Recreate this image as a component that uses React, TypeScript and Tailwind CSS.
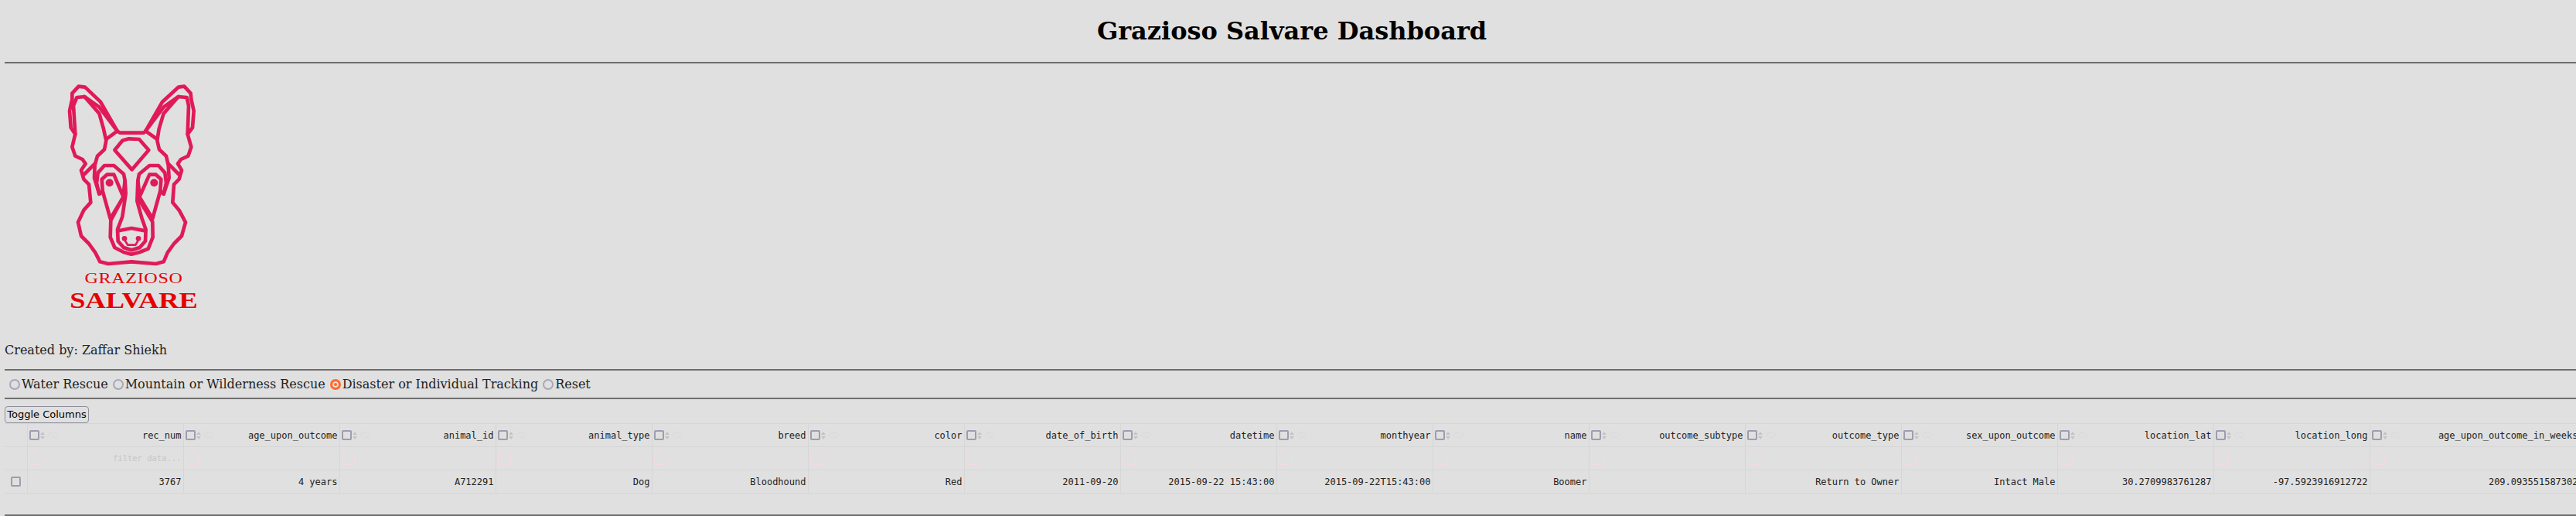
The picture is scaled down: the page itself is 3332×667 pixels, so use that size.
const columns = [
  { name: "rec_num", value: "3767" },
  { name: "age_upon_outcome", value: "4 years" },
  { name: "animal_id", value: "A712291" },
  { name: "animal_type", value: "Dog" },
  { name: "breed", value: "Bloodhound" },
  { name: "color", value: "Red" },
  { name: "date_of_birth", value: "2011-09-20" },
  { name: "datetime", value: "2015-09-22 15:43:00" },
  { name: "monthyear", value: "2015-09-22T15:43:00" },
  { name: "name", value: "Boomer" },
  { name: "outcome_subtype", value: "" },
  { name: "outcome_type", value: "Return to Owner" },
  { name: "sex_upon_outcome", value: "Intact Male" },
  { name: "location_lat", value: "30.2709983761287" },
  { name: "location_long", value: "-97.5923916912722" },
  { name: "age_upon_outcome_in_weeks", value: "209.093551587302" },
];

const radios = ["Water Rescue", "Mountain or Wilderness Rescue", "Disaster or Individual Tracking", "Reset"];

function Logo() {
  return (
    <svg viewBox="0 0 660 780" className="block w-[220px] h-[260px]" fill="none" stroke="#e01a59" strokeWidth="14" strokeLinejoin="round" strokeLinecap="round">
      {/* outer outline, left then right */}
      <path d="M275 238 L210 125 L150 68 L125 65 L100 92 L100 115 L90 160 L95 225 L112 250 L100 300 L112 335 L140 348 L152 365 L135 390 L145 425 L165 445 L172 515 L145 545 L123 592 L135 645 L165 675 L190 710 L208 745 L240 753 L330 745" />
      <path d="M385 238 L450 125 L512 68 L535 65 L560 92 L562 115 L572 160 L567 225 L548 250 L562 300 L550 335 L522 348 L510 365 L525 390 L515 425 L495 445 L490 515 L515 545 L540 592 L525 645 L495 675 L470 710 L455 745 L425 753 L330 745" />
      <path d="M275 238 L285 245 L378 245 L385 238" />
      {/* inner ear */}
      <path d="M112 250 L105 140 L118 108 L148 105 L205 170 L222 230 L232 275 L225 310 L198 335 L188 370 L186 420 L205 482" />
      <path d="M548 250 L552 140 L545 108 L512 105 L455 170 L437 230 L430 275 L438 310 L465 335 L473 370 L476 420 L455 482" />
      <path d="M148 105 L205 145 L275 238 L232 270" />
      <path d="M512 105 L455 145 L385 238 L430 270" />
      <path d="M188 365 L148 405" />
      <path d="M473 365 L513 405" />
      {/* forehead */}
      <path d="M265 312 L295 275 L320 268 L360 270 L397 312 L332 388 Z" />
      {/* brows and eyes */}
      <path d="M205 482 L195 440 L200 400 L225 372 L262 372 L300 405 L305 430 L298 492" />
      <path d="M455 482 L465 440 L460 400 L435 372 L400 372 L360 405 L355 430 L362 492" />
      <path d="M205 482 L218 470 L248 578 L298 495" />
      <path d="M455 482 L442 470 L412 578 L362 495" />
      <path d="M218 470 L215 425 L235 407 L262 407 L298 492" />
      <path d="M442 470 L445 425 L425 407 L400 407 L362 492" />
      {/* muzzle */}
      <path d="M295 500 L250 585 L248 650 L265 690 L300 708 L330 716 L362 708 L395 695 L413 650 L412 590 L360 505" />
      <path d="M305 430 L308 480 L295 570 L276 620 L278 665 L300 690 L330 700 L362 690 L384 665 L386 620 L370 575 L352 510 L355 430" />
      <path d="M280 625 L330 615 L384 625" />
      <path d="M300 655 L316 680 L346 680 L360 655" strokeWidth="8" />
      <circle cx="245" cy="439" r="15" fill="#e01a59" stroke="none" />
      <circle cx="418" cy="439" r="15" fill="#e01a59" stroke="none" />
      <circle cx="303" cy="655" r="10" fill="#e01a59" stroke="none" />
      <circle cx="357" cy="655" r="10" fill="#e01a59" stroke="none" />
    </svg>
  );
}

function HeaderControls() {
  return (
    <div className="flex items-center shrink-0">
      <span className="block w-[13px] h-[13px] border-2 border-[#9f9cb0] rounded-[2px]" />
      <svg viewBox="0 0 6 10" className="ml-[1px] w-[6px] h-[10px]" fill="#c4c4c4">
        <path d="M3 0 L6 4 L0 4 Z M3 10 L0 6 L6 6 Z" />
      </svg>
      <svg viewBox="0 0 16 16" className="ml-[3px] w-[15px] h-[15px]" fill="none" stroke="#dadada" strokeWidth="1">
        <path d="M1 8 C4 3 12 3 15 8 C12 13 4 13 1 8 Z" />
        <path d="M3 2 L13 14" />
      </svg>
    </div>
  );
}

export default function App() {
  return (
    <div className="w-[3332px] h-[667px] overflow-hidden bg-[#e0e0e0] pl-[6px] text-[#222] [font-family:'DejaVu_Serif',serif]">
      <h1 className="h-[80px] pt-[21px] pl-[4px] text-center text-[32px] leading-[38px] font-bold text-black">Grazioso Salvare Dashboard</h1>
      <hr className="border-0 h-[2px] bg-[#6e6e6e]" />
      <div className="pt-[8px] pl-[54px] h-[335px]">
        <Logo />
        <div className="mt-0 ml-[30px] w-[166px] text-center text-[#e60000] [font-family:'Liberation_Serif',serif]">
          <div className="text-[19px] leading-[20px] tracking-[0.5px] scale-x-[1.27]">GRAZIOSO</div>
          <div className="text-[30px] leading-[30px] font-bold scale-x-[1.21] mt-[3px]">SALVARE</div>
        </div>
      </div>
      <p className="h-[60px] pt-[26px] text-[16px] leading-[19px]">Created by: Zaffar Shiekh</p>
      <hr className="border-0 h-[2px] bg-[#6e6e6e]" />
      <div className="flex items-center h-[35px] pl-[6px] text-[16px]">
        {radios.map((label, i) => (
          <label key={label} className="flex items-center mr-[6px]">
            <span className={i === 2 ? "mr-[2px] w-[14px] h-[14px] rounded-full border-[3px] border-[#ff6a2b] bg-[#ff6a2b] shadow-[inset_0_0_0_2px_#e0e0e0]" : "mr-[2px] w-[14px] h-[14px] rounded-full border-2 border-[#a9a7b7]"} />
            {label}
          </label>
        ))}
      </div>
      <hr className="border-0 h-[2px] bg-[#6e6e6e]" />
      <div className="pt-[9px] h-[149px] [font-family:'DejaVu_Sans_Mono',monospace] text-[12px] text-[#222]">
        <button className="block h-[22px] w-[109px] border border-[#8f8f9d] rounded-[4px] [font-family:'DejaVu_Sans',sans-serif] text-[13px] text-black">Toggle Columns</button>
        <table className="table-fixed border-collapse w-[3329px]">
          <colgroup>
            <col className="w-[29px]" />
            {columns.map((c, i) => (
              <col key={c.name} className={i === columns.length - 1 ? "w-[272px]" : "w-[202px]"} />
            ))}
          </colgroup>
          <tbody>
            <tr className="h-[30px]">
              <td className="border border-[#d6d6d6] border-l-0" />
              {columns.map((c) => (
                <th key={c.name} className="border border-[#d6d6d6] px-[2px] font-normal overflow-hidden">
                  <div className="flex items-center justify-between">
                    <HeaderControls />
                    <span className="whitespace-nowrap">{c.name}</span>
                  </div>
                </th>
              ))}
            </tr>
            <tr className="h-[30px]">
              <td className="border border-[#d6d6d6] border-l-0" />
              {columns.map((c, i) => (
                <td key={c.name} className="border border-[#d6d6d6] px-[2px]">
                  <div className="flex items-center justify-between">
                    <span className="block w-[17px] h-[16px] border border-[#f1dbe2] rounded-[2px]" />
                    {i === 0 && <span className="text-[10.5px] text-[#c6c6c6]">filter data...</span>}
                  </div>
                </td>
              ))}
            </tr>
            <tr className="h-[30px]">
              <td className="border border-[#d6d6d6] border-l-0 pl-[8px]">
                <span className="block w-[13px] h-[13px] border-2 border-[#9f9cb0] rounded-[2px]" />
              </td>
              {columns.map((c) => (
                <td key={c.name} className="border border-[#d6d6d6] px-[2px] text-right whitespace-nowrap">{c.value}</td>
              ))}
            </tr>
          </tbody>
        </table>
      </div>
      <hr className="border-0 h-[2px] bg-[#6e6e6e]" />
    </div>
  );
}
